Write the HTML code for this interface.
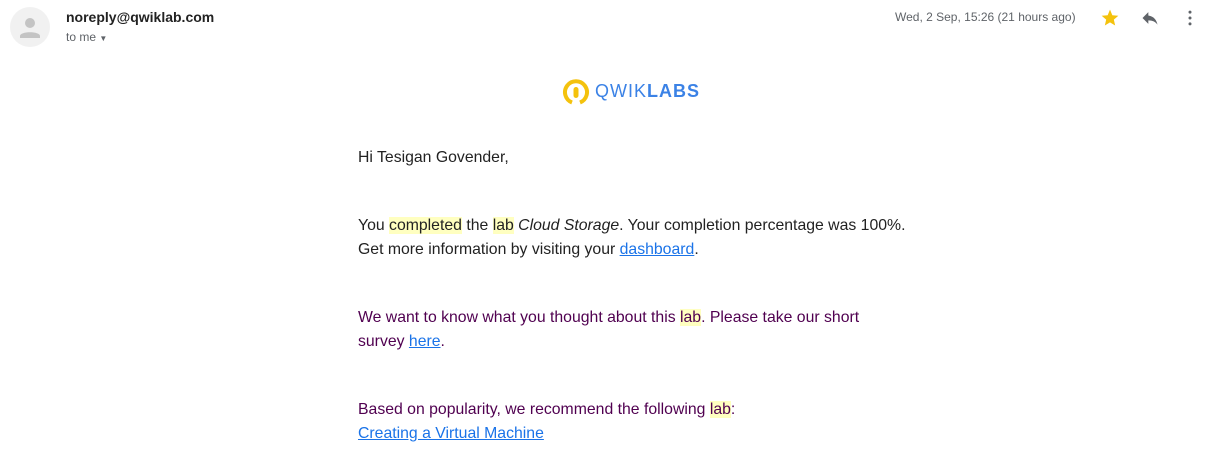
<!DOCTYPE html>
<html><head><meta charset="utf-8"><style>
body{margin:0;width:1211px;height:475px;background:#fff;font-family:"Liberation Sans",sans-serif;position:relative;overflow:hidden}
.abs{position:absolute}
.av{left:10px;top:7px;width:40px;height:40px;border-radius:50%;background:#f1f1f1}
.from{left:66px;top:9px;font-size:14px;font-weight:bold;color:#222}
.to{left:66px;top:30px;font-size:12px;color:#5f6368}
.date{left:895px;top:10px;font-size:12px;color:#5f6368}
.body{left:358px;font-size:15.8px;color:#222;line-height:24px;white-space:nowrap}
.p{color:#500050}
mark{background:#ffffc0;color:inherit}
a{color:#1a73e8;text-decoration:underline}
</style></head><body>
<div class="abs av"><svg width="40" height="40"><circle cx="20" cy="16" r="5" fill="#c4c4c4"/><path d="M10 29c0-5 20-5 20 0v2H10z" fill="#c4c4c4"/></svg></div>
<div class="abs from">noreply@qwiklab.com</div>
<div class="abs to">to me <span style="font-size:8px">▼</span></div>
<div class="abs date">Wed, 2 Sep, 15:26 (21 hours ago)</div>
<svg class="abs" style="left:1100px;top:8px" width="20" height="20" viewBox="0 0 24 24"><path d="M12 17.3l6.2 3.7-1.6-7 5.4-4.7-7.2-.6L12 2 9.2 8.7 2 9.3l5.4 4.7-1.6 7z" fill="#f4c20d"/></svg>
<svg class="abs" style="left:1140px;top:8px" width="20" height="20" viewBox="0 0 24 24"><path d="M10 9V5l-7 7 7 7v-4.1c5 0 8.5 1.6 11 5.1-1-5-4-10-11-11z" fill="#5f6368"/></svg>
<svg class="abs" style="left:1180px;top:8px" width="20" height="20" viewBox="0 0 24 24"><circle cx="12" cy="5" r="1.8" fill="#5f6368"/><circle cx="12" cy="12" r="1.8" fill="#5f6368"/><circle cx="12" cy="19" r="1.8" fill="#5f6368"/></svg>
<svg class="abs" style="left:562px;top:78px" width="28" height="28" viewBox="0 0 28 28"><path d="M10 24.5A11 11 0 1 1 18 24.5" stroke="#f4c20d" stroke-width="4" fill="none"/><rect x="11.5" y="9" width="5" height="11" rx="2.5" fill="#f4c20d"/></svg>
<div class="abs" style="left:595px;top:81px;font-size:18px;color:#3b82e6;letter-spacing:1px"><span>QWIK</span><b>LABS</b></div>
<div class="abs body" style="top:146px">Hi Tesigan Govender,</div>
<div class="abs body" style="top:214px">You <mark>completed</mark> the <mark>lab</mark> <i>Cloud Storage</i>. Your completion percentage was 100%.<br>Get more information by visiting your <a>dashboard</a>.</div>
<div class="abs body p" style="top:306px">We want to know what you thought about this <mark>lab</mark>. Please take our short<br>survey <a>here</a>.</div>
<div class="abs body p" style="top:398px">Based on popularity, we recommend the following <mark>lab</mark>:<br><a>Creating a Virtual Machine</a></div>
</body></html>
